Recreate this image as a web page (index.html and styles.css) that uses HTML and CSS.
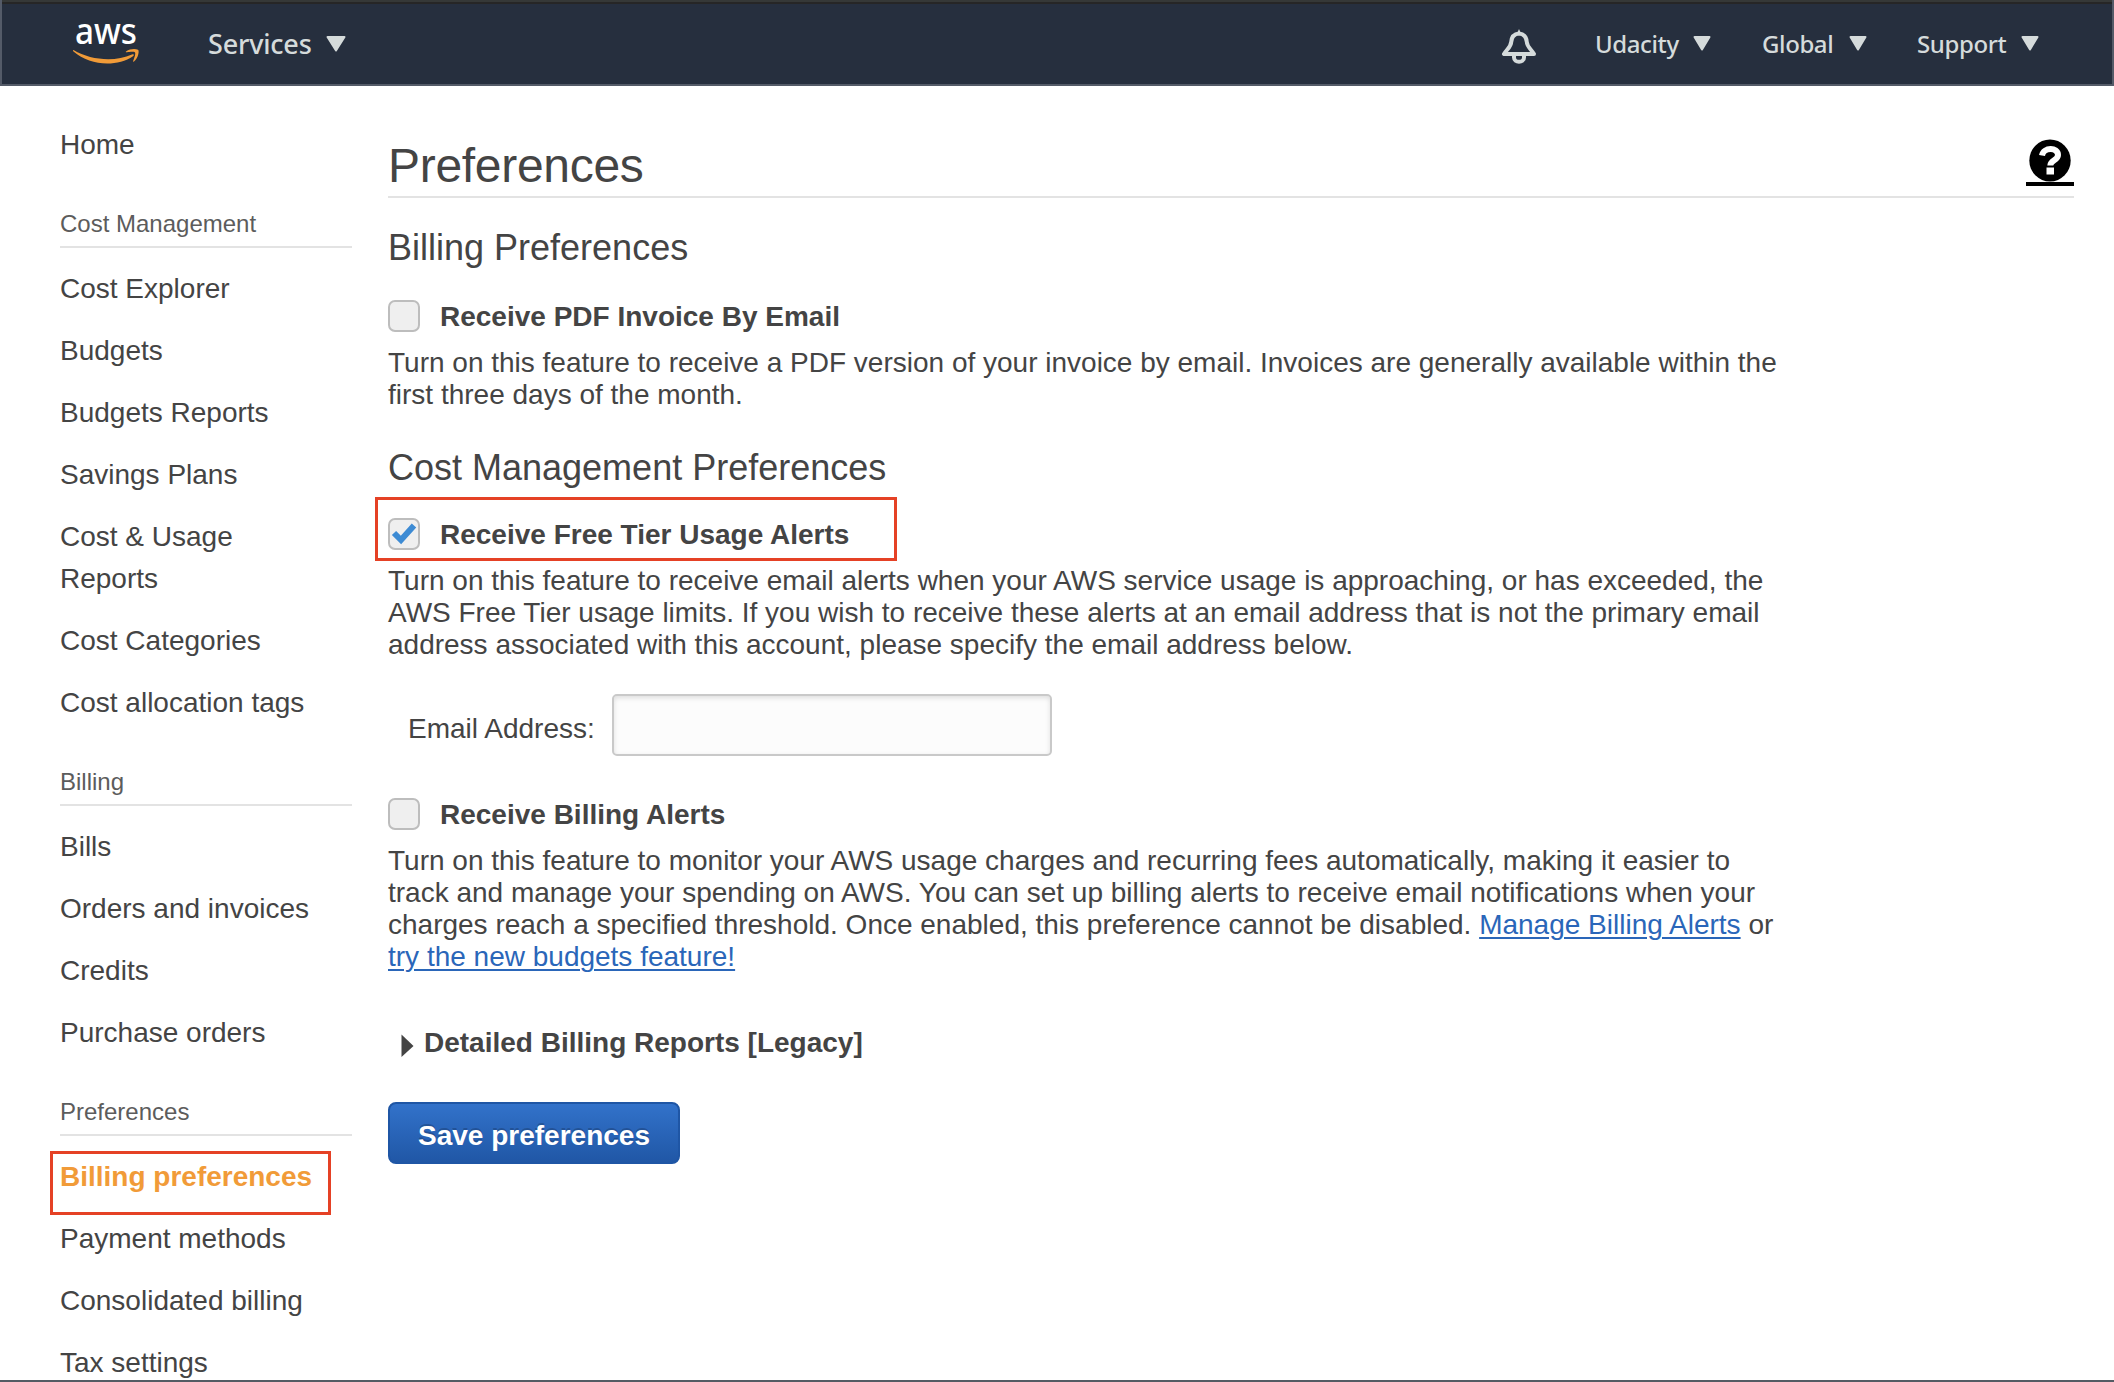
FILE: index.html
```html
<!DOCTYPE html>
<html lang="en">
<head>
<meta charset="utf-8">
<title>Billing preferences</title>
<link rel="stylesheet" href="styles.css">
</head>
<body>
<header class="topbar">
  <svg class="logo" width="66" height="46" viewBox="0 0 66 46">
    <text class="logo-text" x="2" y="25" textLength="62" lengthAdjust="spacingAndGlyphs">aws</text>
    <path fill="#f19b38" d="M0.500 31C18 41.500 42 43 59 35.500C61 34.600 61.500 36 60 37.200C44 48 17 47 0.500 32.500C-0.300 31.600 0 30.800 0.500 31Z"/>
    <path fill="#f19b38" d="M53 32.500C57 29.800 62 29.500 65 30.800C66.500 31.500 65.500 39 61 42.500C60.300 43 59.800 42.600 60.200 41.800C61.500 38.500 62.800 34.500 62 33.400C61 32.300 56.500 32.800 54 33.200C52.800 33.400 52.500 33 53 32.500Z"/>
  </svg>
  <nav class="nav-left">
    <a class="menu menu-services">Services <svg width="20" height="16" viewBox="0 0 20 16"><path class="caret" d="M1.500 1h17L10 14.500z"/></svg></a>
  </nav>
  <nav class="nav-right">
    <svg class="bell" width="36" height="36" viewBox="0 0 36 36"><g fill="none" stroke="#d5dbdb" stroke-width="4" stroke-linejoin="round"><path d="M18 4.500C13 5 10.500 8.500 10.200 13C9.900 18 6 20 3 25H33C30 20 26.100 18 25.800 13C25.500 8.500 23 5 18 4.500Z"/><path d="M13 26V28.500C13 34.200 23 34.200 23 28.500V26"/></g><path fill="#d5dbdb" d="M15.800 5L18 0L20.200 5z"/></svg>
    <a class="menu menu-user">Udacity <svg width="18" height="15" viewBox="0 0 18 15"><path class="caret" d="M1.500 1h15L9 13.500z"/></svg></a>
    <a class="menu menu-region">Global <svg width="18" height="15" viewBox="0 0 18 15"><path class="caret" d="M1.500 1h15L9 13.500z"/></svg></a>
    <a class="menu menu-support">Support <svg width="18" height="15" viewBox="0 0 18 15"><path class="caret" d="M1.500 1h15L9 13.500z"/></svg></a>
  </nav>
</header>
<div class="page">
  <aside class="sidebar">
    <a class="home">Home</a>
    <h3>Cost Management</h3>
    <ul>
      <li>Cost Explorer</li><li>Budgets</li><li>Budgets Reports</li><li>Savings Plans</li><li>Cost &amp; Usage<br>Reports</li><li>Cost Categories</li><li>Cost allocation tags</li>
    </ul>
    <h3>Billing</h3>
    <ul>
      <li>Bills</li><li>Orders and invoices</li><li>Credits</li><li>Purchase orders</li>
    </ul>
    <h3>Preferences</h3>
    <ul>
      <li class="active"><span>Billing preferences</span></li><li>Payment methods</li><li>Consolidated billing</li><li>Tax settings</li>
    </ul>
  </aside>
  <main class="content">
    <div class="title-row">
      <h1>Preferences</h1>
      <a class="help"><svg width="42" height="43" viewBox="0 0 42 43"><ellipse cx="21" cy="21.500" rx="20.700" ry="21"/><path d="M13 16.500C14.500 8 29 8 29 16C29 21.500 21.300 21 21.300 26.500" fill="none" stroke="#fff" stroke-width="6"/><rect x="17.500" y="28.500" width="7.500" height="7" fill="#fff"/></svg></a>
    </div>
    <h2>Billing Preferences</h2>
    <label class="option"><span class="box"></span><span class="option-name">Receive PDF Invoice By Email</span></label>
    <p>Turn on this feature to receive a PDF version of your invoice by email. Invoices are generally available within the<br>first three days of the month.</p>
    <h2 class="cost-title">Cost Management Preferences</h2>
    <label class="option highlighted"><span class="box"><svg width="26" height="26" viewBox="0 0 26 26"><path d="M3 12L10 19L23 4.500" fill="none" stroke="#3d8bd4" stroke-width="6"/></svg></span><span class="option-name">Receive Free Tier Usage Alerts</span></label>
    <p>Turn on this feature to receive email alerts when your AWS service usage is approaching, or has exceeded, the<br>AWS Free Tier usage limits. If you wish to receive these alerts at an email address that is not the primary email<br>address associated with this account, please specify the email address below.</p>
    <div class="field"><label for="email">Email Address:</label><input id="email" type="text"></div>
    <label class="option"><span class="box"></span><span class="option-name">Receive Billing Alerts</span></label>
    <p>Turn on this feature to monitor your AWS usage charges and recurring fees automatically, making it easier to<br>track and manage your spending on AWS. You can set up billing alerts to receive email notifications when your<br>charges reach a specified threshold. Once enabled, this preference cannot be disabled. <a class="link">Manage Billing Alerts</a> or<br><a class="link">try the new budgets feature!</a></p>
    <div class="legacy"><svg width="13" height="24" viewBox="0 0 13 24"><path d="M0.500 0.500L12.500 12L0.500 23z" fill="#444"/></svg>Detailed Billing Reports [Legacy]</div>
    <button class="save">Save preferences</button>
  </main>
</div>
</body>
</html>
```
FILE: styles.css
```css
* { box-sizing: border-box; }
body {
  margin: 0;
  height: 1382px;
  overflow: hidden;
  display: flex;
  flex-direction: column;
  background: #fff;
  color: #444;
  font: 28px/32px "Liberation Sans", Arial, sans-serif;
  border-bottom: 2px solid #545b64;
}
h1, h2, h3, p, ul { margin: 0; padding: 0; font-weight: 400; }
.topbar {
  height: 86px;
  flex: none;
  display: flex;
  align-items: flex-start;
  background: #262f3e;
  border: solid #545b68;
  border-width: 0 2px 2px;
  box-shadow: inset 0 2px #353837, inset 0 4px #262626;
  color: #d5dbdb;
  font-family: "Noto Sans", sans-serif;
  padding: 0 73px 0 71px;
}
.logo { margin-top: 19px; overflow: visible; }
.logo-text { font: 500 37px "Noto Sans", sans-serif; fill: #fff; }
.nav-left { margin: 28px auto 0 69px; }
.nav-right { display: flex; margin-top: 28px; }
.bell { margin: 1px 58px 0 0; }
.menu { display: flex; justify-content: space-between; font-size: 24px; font-weight: 500; letter-spacing: -0.4px; }
.menu svg { margin-top: 8px; }
.menu-services { width: 138px; font-size: 27px; letter-spacing: -0.2px; }
.menu-user { width: 116px; margin-right: 51px; }
.menu-region { width: 105px; margin-right: 50px; }
.menu-support { width: 122px; }
.caret { fill: #d5dbdb; stroke: #d5dbdb; stroke-width: 2; stroke-linejoin: round; }
.page { display: flex; min-height: 0; }
.sidebar { width: 292px; margin: 38px 36px 0 60px; flex: none; line-height: 42px; }
.home { display: block; }
.sidebar h3 {
  font-size: 24px;
  line-height: 32px;
  color: #5c5c5c;
  margin: 42px 0 20px;
  padding-bottom: 6px;
  border-bottom: 2px solid #e3e3e3;
}
.sidebar ul { list-style: none; display: flex; flex-direction: column; gap: 20px; }
.active { color: #f19b38; font-weight: 700; }
.active span {
  display: block;
  width: 281px;
  height: 64px;
  margin: -5px 0 -17px -10px;
  padding: 2px 7px;
  border: 3px solid #e54125;
}
.content { width: 1686px; padding-top: 48px; }
.title-row {
  display: flex;
  justify-content: space-between;
  height: 64px;
  border-bottom: 2px solid #e3e3e3;
}
h1 { font-size: 48px; line-height: 64px; letter-spacing: -0.3px; }
.help { width: 48px; height: 47px; margin-top: 5px; border-bottom: 4px solid #000; text-align: center; line-height: 0; }
h2 { font-size: 36px; line-height: 44px; margin-top: 28px; }
.option { display: flex; align-items: center; height: 32px; margin: 30px 0 15px; font-weight: 700; }
.option-name { padding-top: 2px; }
.box {
  width: 32px;
  height: 32px;
  margin-right: 20px;
  padding: 1px;
  background: #efefef;
  border: 2px solid #bdbdbd;
  border-radius: 7px;
  line-height: 0;
}
.cost-title { margin-top: 35px; }
.highlighted {
  width: 522px;
  height: 64px;
  margin: 7px 0 4px -13px;
  padding: 10px 0 0 10px;
  border: 3px solid #e54125;
}
.field { display: flex; align-items: center; height: 62px; margin: 33px 0 42px 20px; }
.field label { width: 204px; padding-top: 7px; }
.field input {
  width: 440px;
  height: 62px;
  border: 2px solid #c9c9c9;
  border-radius: 5px;
  background: #fcfcfc;
  box-shadow: inset 0 2px 5px rgba(0,0,0,.12);
}
.link { color: #2a66b9; text-decoration: underline; text-underline-offset: 3px; text-decoration-thickness: 2px; }
.legacy { display: flex; gap: 10px; margin: 54px 0 43px 13px; font-weight: 700; }
.legacy svg { margin-top: 7px; }
.save {
  display: block;
  width: 292px;
  height: 62px;
  padding: 6px 0 0;
  border: 2px solid #1f56a5;
  border-radius: 8px;
  background: linear-gradient(#3272ca, #2057a6);
  color: #fff;
  font: 700 28px/32px "Liberation Sans", Arial, sans-serif;
  text-shadow: 0 -2px rgba(0,0,0,.2);
}
```
